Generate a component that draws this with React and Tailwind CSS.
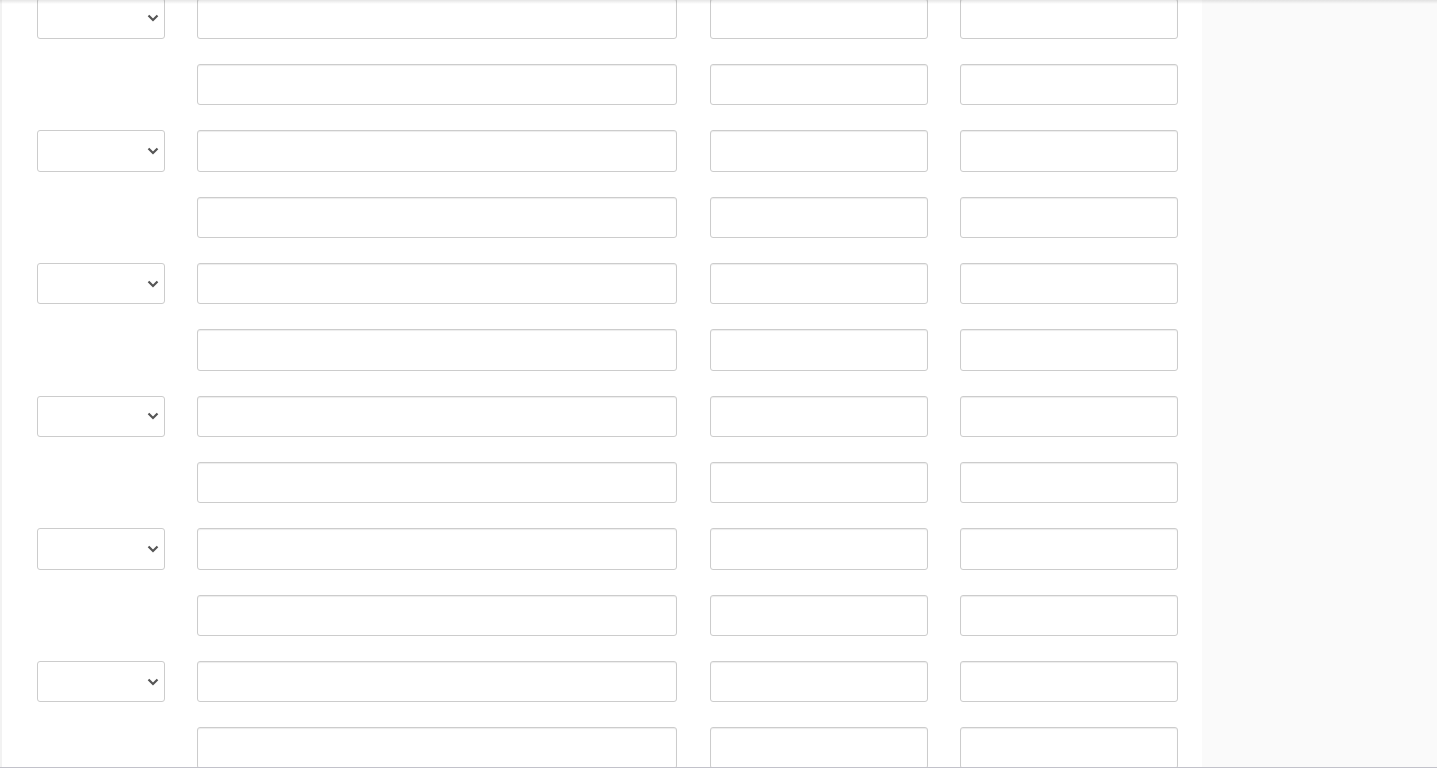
import React from 'react'

const groups = [0, 1, 2, 3, 4, 5]

function Chevron() {
  return (
    <svg width="12" height="8" viewBox="0 0 12 8" fill="none">
      <polyline points="1.5,1.5 6,6 10.5,1.5" stroke="#555" strokeWidth="2.2" />
    </svg>
  )
}

function Field({ className }) {
  return (
    <input
      type="text"
      className={`h-[41.33px] rounded-[3px] border border-[#cccccc] bg-white shadow-[inset_0_1px_1px_rgba(0,0,0,0.075)] outline-none ${className}`}
    />
  )
}

function Row({ withSelect }) {
  return (
    <div className="flex items-start mb-[25px]">
      <div className="w-[128px] ml-[35px]">
        {withSelect && (
          <div className="h-[41.33px] rounded-[3px] border border-[#cccccc] bg-white flex items-center justify-end pr-[5px]">
            <Chevron />
          </div>
        )}
      </div>
      <Field className="w-[480px] ml-[32px]" />
      <Field className="w-[218px] ml-[33px]" />
      <Field className="w-[218px] ml-[32px]" />
    </div>
  )
}

export default function App() {
  return (
    <div className="relative h-[768px] overflow-hidden border-b border-[#c2c2ca] flex" style={{ fontFamily: '"Liberation Sans", Arial, sans-serif' }}>
      {/* top shadow */}
      <div className="absolute top-0 left-0 right-0 h-[4px] bg-gradient-to-b from-black/10 to-transparent pointer-events-none" />
      <div className="w-[2px] bg-[#f2f2f2]" />
      <div className="w-[1200px] bg-white">
        <div className="-mt-[2.33px]">
          {groups.map((g) => (
            <React.Fragment key={g}>
              <Row withSelect />
              <Row />
            </React.Fragment>
          ))}
        </div>
      </div>
      <div className="flex-1 bg-[#fafafa]" />
    </div>
  )
}
